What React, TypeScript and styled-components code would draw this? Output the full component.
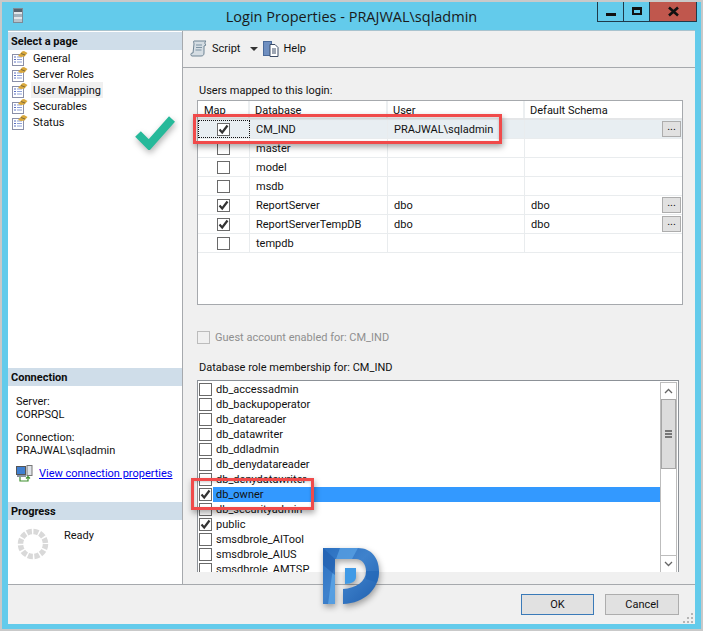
import styled, { createGlobalStyle } from 'styled-components'

const GlobalStyle = createGlobalStyle`
	html, body {
		margin: 0;
		padding: 0;
		background: #c9c9c9;
	}
	* {
		box-sizing: border-box;
	}
`

const mappings = [
	{ name: 'CM_IND', user: 'PRAJWAL\\sqladmin', schema: '', checked: true, action: true, focused: true },
	{ name: 'master', user: '', schema: '', checked: false, action: false, focused: false },
	{ name: 'model', user: '', schema: '', checked: false, action: false, focused: false },
	{ name: 'msdb', user: '', schema: '', checked: false, action: false, focused: false },
	{ name: 'ReportServer', user: 'dbo', schema: 'dbo', checked: true, action: true, focused: false },
	{ name: 'ReportServerTempDB', user: 'dbo', schema: 'dbo', checked: true, action: true, focused: false },
	{ name: 'tempdb', user: '', schema: '', checked: false, action: false, focused: false },
]

const roles = [
	'db_accessadmin',
	'db_backupoperator',
	'db_datareader',
	'db_datawriter',
	'db_ddladmin',
	'db_denydatareader',
	'db_denydatawriter',
	'db_owner',
	'db_securityadmin',
	'public',
	'smsdbrole_AITool',
	'smsdbrole_AIUS',
	'smsdbrole_AMTSP',
]

const pages = ['General', 'Server Roles', 'User Mapping', 'Securables', 'Status']

function PageIcon() {
	return (
		<svg width="16" height="16" viewBox="0 0 16 16">
			<rect x="0.5" y="4.5" width="11" height="11" fill="#fff" stroke="#8a8fa8" />
			<path d="M2 7h2M2 9.5h2M2 12h2" stroke="#5a6fc0" />
			<path d="M5 7h5M5 9.5h5M5 12h5" stroke="#8da0d8" />
			<path d="M6 6 10 1.5 12 1l3.5 2-3 3.5L9 7z" fill="#d9a83c" />
			<path d="M9 3.5 13 5" stroke="#7a6a40" />
		</svg>
	)
}

function CheckMark() {
	return (
		<svg width="11" height="11" viewBox="0 0 11 11">
			<path d="M1.5 5.5 4.2 8.5 9.5 1.5" fill="none" stroke="#333" strokeWidth="2.2" />
		</svg>
	)
}

function TitleIcon() {
	return (
		<svg width="10" height="15" viewBox="0 0 10 15">
			<rect x="0.5" y="0.5" width="9" height="14" fill="#e4e7ea" stroke="#7d8a96" />
			<rect x="1" y="1" width="8" height="3" fill="#59636e" />
			<rect x="1" y="6" width="8" height="3" fill="#a3b1bc" />
			<rect x="1" y="11" width="8" height="3" fill="#b9c3cb" />
		</svg>
	)
}

function ScriptIcon() {
	return (
		<svg width="18" height="17" viewBox="0 0 18 17">
			<path
				d="M4 1h12c-1.5 1-1.5 3 0 4l-2 1v7c0 2-1 3-3 3H2c-1.5 0-1.5-3 0-3h1l1-9C4 3 3 1 4 1z"
				fill="#d5dde3"
				stroke="#6f8494"
			/>
			<path d="M6 5h6M6 7.5h6M5.5 10h6" stroke="#7d93a3" />
		</svg>
	)
}

function HelpIcon() {
	return (
		<svg width="16" height="17" viewBox="0 0 16 17">
			<rect x="0.5" y="1.5" width="8" height="14" fill="#6f8fc0" stroke="#4a6a9a" />
			<path d="M7 4.5h5l3 3v9H7z" fill="#fff" stroke="#3d4c66" />
			<path d="M9 9h4M9 11h4M9 13h4" stroke="#3d4c66" />
		</svg>
	)
}

function ConnectionIcon() {
	return (
		<svg width="17" height="17" viewBox="0 0 17 17">
			<rect x="0.5" y="1.5" width="9" height="8" fill="#3f7fd0" stroke="#555" />
			<rect x="11" y="0.5" width="5" height="10" fill="#dfe3e8" stroke="#777" />
			<rect x="1" y="10" width="9" height="2" fill="#8a93a0" />
			<path d="M4 12v4h8v-4M10 13.5 12 11.5 14 13.5" fill="none" stroke="#3f8f2f" strokeWidth="1.2" />
		</svg>
	)
}

function App() {
	return (
		<>
			<GlobalStyle />
			<Screen>
				<TitleBar>
					<TitleBadge>
						<TitleIcon />
					</TitleBadge>
					<Title>Login Properties - PRAJWAL\sqladmin</Title>
					<WindowControls>
						<ControlButton>
							<MinimizeGlyph />
						</ControlButton>
						<ControlButton>
							<MaximizeGlyph />
						</ControlButton>
						<CloseButton>
							<svg width="13" height="11" viewBox="0 0 13 11">
								<path d="M2 1.5 11 9.5M11 1.5 2 9.5" stroke="#111" strokeWidth="2.6" />
							</svg>
						</CloseButton>
					</WindowControls>
				</TitleBar>
				<Content>
					<Body>
						<Sidebar>
							<PagesSection>
								<SectionHeader>Select a page</SectionHeader>
								<PageList>
									{pages.map((page) => (
										<PageItem key={page}>
											<PageIcon />
											<PageLabel $active={page === 'User Mapping'}>{page}</PageLabel>
										</PageItem>
									))}
								</PageList>
							</PagesSection>
							<ConnectionSection>
								<SectionHeader>Connection</SectionHeader>
								<ConnectionBody>
									<InfoBlock>
										<span>Server:</span>
										<span>CORPSQL</span>
									</InfoBlock>
									<InfoBlock>
										<span>Connection:</span>
										<span>PRAJWAL\sqladmin</span>
									</InfoBlock>
									<LinkRow>
										<ConnectionIcon />
										<ConnectionLink>View connection properties</ConnectionLink>
									</LinkRow>
								</ConnectionBody>
							</ConnectionSection>
							<ProgressSection>
								<SectionHeader>Progress</SectionHeader>
								<ProgressBody>
									<svg width="32" height="32" viewBox="0 0 32 32">
										<circle
											cx="16"
											cy="16"
											r="12.5"
											fill="none"
											stroke="#d9d9d9"
											strokeWidth="5.5"
											strokeDasharray="5 1.55"
										/>
									</svg>
									<ReadyText>Ready</ReadyText>
								</ProgressBody>
							</ProgressSection>
						</Sidebar>
						<Main>
							<Toolbar>
								<ToolButton>
									<ScriptIcon />
									<span>Script</span>
								</ToolButton>
								<DropArrow />
								<ToolButton>
									<HelpIcon />
									<span>Help</span>
								</ToolButton>
							</Toolbar>
							<Panel>
								<FieldLabel>Users mapped to this login:</FieldLabel>
								<MappingGrid>
									<GridHeader>
										<HeaderCell>Map</HeaderCell>
										<HeaderCell>Database</HeaderCell>
										<HeaderCell>User</HeaderCell>
										<HeaderCell>Default Schema</HeaderCell>
									</GridHeader>
									{mappings.map((row) => (
										<GridRow key={row.name} $focused={row.focused}>
											<MapCell $focused={row.focused}>
												<Checkbox>{row.checked && <CheckMark />}</Checkbox>
											</MapCell>
											<GridCell>{row.name}</GridCell>
											<GridCell>{row.user}</GridCell>
											<SchemaCell>
												{row.schema}
												{row.action && <EllipsisButton>...</EllipsisButton>}
											</SchemaCell>
										</GridRow>
									))}
								</MappingGrid>
								<GuestRow>
									<Checkbox $disabled />
									<span>Guest account enabled for: CM_IND</span>
								</GuestRow>
								<RoleLabel>Database role membership for: CM_IND</RoleLabel>
								<RoleList>
									<RoleRows>
										{roles.map((role) => (
											<RoleRow key={role}>
												<Checkbox>{(role === 'db_owner' || role === 'public') && <CheckMark />}</Checkbox>
												<RoleName $selected={role === 'db_owner'}>{role}</RoleName>
											</RoleRow>
										))}
									</RoleRows>
									<ScrollBar>
										<ScrollArrow>
											<svg width="9" height="6" viewBox="0 0 9 6">
												<path d="M1 5 4.5 1.5 8 5" fill="none" stroke="#666" strokeWidth="1.3" />
											</svg>
										</ScrollArrow>
										<ScrollThumb>
											<Grip />
											<Grip />
											<Grip />
										</ScrollThumb>
										<ScrollTrack />
										<ScrollArrow>
											<svg width="9" height="6" viewBox="0 0 9 6">
												<path d="M1 1 4.5 4.5 8 1" fill="none" stroke="#666" strokeWidth="1.3" />
											</svg>
										</ScrollArrow>
									</ScrollBar>
								</RoleList>
							</Panel>
						</Main>
					</Body>
					<Footer>
						<DefaultButton>OK</DefaultButton>
						<PushButton>Cancel</PushButton>
						<GripCorner viewBox="0 0 12 12">
							<path d="M9 2h2v2H9zM5 6h2v2H5zM9 6h2v2H9zM1 10h2v2H1zM5 10h2v2H5zM9 10h2v2H9z" fill="#b5b5b5" />
						</GripCorner>
					</Footer>
				</Content>
				<Callout $left={191} $top={112} $width={309} $height={30} />
				<Callout $left={189} $top={476} $width={123} $height={32} />
				<TickMark viewBox="0 0 40 36">
					<path d="M3 20 14 31 37 5" fill="none" stroke="#26b99a" strokeWidth="8" />
				</TickMark>
				<Logo viewBox="0 0 85 85">
					<defs>
						<linearGradient id="logoFill" x1="0" y1="0" x2="1" y2="1">
							<stop offset="0" stopColor="#2a6fc0" />
							<stop offset="0.45" stopColor="#3f82cc" />
							<stop offset="1" stopColor="#1f5fae" />
						</linearGradient>
						<clipPath id="logoShape">
							<path d="M13 13H48C62 13 69 24 69 36C69 54 55 68 33 69V54C46 53 56 47 56 36C56 29 52 24 46 24H25V69H13Z" />
						</clipPath>
					</defs>
					<path
						d="M13 13H48C62 13 69 24 69 36C69 54 55 68 33 69V54C46 53 56 47 56 36C56 29 52 24 46 24H25V69H13Z"
						fill="url(#logoFill)"
					/>
					<g clipPath="url(#logoShape)">
						<path d="M30 13H48L42 24H26z" fill="#5aa2e4" opacity="0.75" />
						<path d="M18 69 22 40 25 30V69z" fill="#62aceb" opacity="0.7" />
						<path d="M13 13 25 24V40L13 30z" fill="#1f5cab" opacity="0.6" />
						<path d="M56 36H69V48L56 44z" fill="#2368b8" opacity="0.7" />
					</g>
					<path d="M35 33H46V42C46 46 42 49 35 49Z" fill="#3f9ae6" />
				</Logo>
			</Screen>
		</>
	)
}

const Screen = styled.div`
	position: relative;
	width: 703px;
	height: 631px;
	border: 2px solid #c9c9c9;
	background: #63cbeb;
	padding: 0 6px 5px;
	overflow: hidden;
	display: flex;
	flex-direction: column;
	font-family: 'Roboto', 'Open Sans', sans-serif;
	font-size: 11px;
	color: #111;
`

const TitleBar = styled.div`
	position: relative;
	height: 29px;
	flex: none;
	display: flex;
	align-items: center;
	justify-content: center;
`

const TitleBadge = styled.div`
	position: absolute;
	left: 5px;
	top: 6px;
	display: flex;
`

const Title = styled.div`
	font-family: 'Open Sans', 'Noto Sans', sans-serif;
	font-size: 14.5px;
	color: #1a1a1a;
`

const WindowControls = styled.div`
	position: absolute;
	right: -2px;
	top: 0;
	height: 20px;
	display: flex;
	border: 1px solid #1f3a4a;
	border-top: none;
`

const ControlButton = styled.div`
	width: 26px;
	display: flex;
	align-items: center;
	justify-content: center;
	border-right: 1px solid #1f3a4a;
`

const CloseButton = styled.div`
	width: 46px;
	display: flex;
	align-items: center;
	justify-content: center;
	background: #c0574d;
`

const MinimizeGlyph = styled.div`
	width: 10px;
	height: 3px;
	margin-top: 5px;
	background: #111;
`

const MaximizeGlyph = styled.div`
	width: 10px;
	height: 8px;
	border: 2px solid #111;
	border-top-width: 3px;
	margin-bottom: 2px;
`

const Content = styled.div`
	flex: 1;
	display: flex;
	flex-direction: column;
	background: #f0f0f0;
	min-height: 0;
	box-shadow: 0 -1px 0 #a9c3ce;
`

const Body = styled.div`
	flex: 1;
	display: flex;
	min-height: 0;
	border-bottom: 1px solid #a6a9ad;
`

const Sidebar = styled.div`
	width: 175px;
	flex: none;
	display: flex;
	flex-direction: column;
	background: #fff;
	border-right: 1px solid #a6a9ad;
`

const SectionHeader = styled.div`
	height: 18px;
	padding: 1px 0 0 3px;
	background: #cfdde9;
	font-weight: 700;
	line-height: 18px;
	color: #0c0c0c;
`

const PagesSection = styled.div`
	flex: 1;
	padding-top: 1px;
`

const PageList = styled.div`
	display: flex;
	flex-direction: column;
	padding: 0 0 0 4px;
`

const PageItem = styled.div`
	height: 16px;
	display: flex;
	align-items: center;
	gap: 3px;
`

const PageLabel = styled.span<{ $active: boolean }>`
	height: 16px;
	padding: 0 2px;
	line-height: 18px;
	background: ${({ $active }) => ($active ? '#f0f0f0' : 'transparent')};
`

const ConnectionSection = styled.div`
	height: 134px;
	flex: none;
`

const ConnectionBody = styled.div`
	display: flex;
	flex-direction: column;
	gap: 10px;
	padding: 9px 0 0 8px;
`

const InfoBlock = styled.div`
	display: flex;
	flex-direction: column;
	line-height: 13px;
`

const LinkRow = styled.div`
	display: flex;
	align-items: center;
	gap: 6px;
	margin-top: -2px;
	white-space: nowrap;
`

const ConnectionLink = styled.a`
	color: #0000ee;
	text-decoration: underline;
`

const ProgressSection = styled.div`
	height: 82px;
	flex: none;
`

const ProgressBody = styled.div`
	display: flex;
	gap: 15px;
	padding: 8px 0 0 9px;
`

const ReadyText = styled.span`
	line-height: 16px;
`

const Main = styled.div`
	flex: 1;
	min-width: 0;
	display: flex;
	flex-direction: column;
`

const Toolbar = styled.div`
	height: 37px;
	flex: none;
	display: flex;
	align-items: center;
	padding: 0 0 2px 7px;
	border-bottom: 1px solid #a6a9ad;
`

const ToolButton = styled.div`
	display: flex;
	align-items: center;
	gap: 4px;
`

const DropArrow = styled.div`
	width: 0;
	height: 0;
	margin: 2px 5px 0 10px;
	border-left: 4px solid transparent;
	border-right: 4px solid transparent;
	border-top: 4px solid #333;
`

const Panel = styled.div`
	flex: 1;
	min-height: 0;
	padding: 14px 0 0 14px;
	display: flex;
	flex-direction: column;
`

const FieldLabel = styled.div`
	height: 16px;
	padding-left: 2px;
	line-height: 18px;
	margin-bottom: 2px;
`

const MappingGrid = styled.div`
	width: 486px;
	height: 205px;
	flex: none;
	background: #fff;
	border: 1px solid #a6a9ad;
`

const columns = '52px 138px 137px 1fr'

const GridHeader = styled.div`
	height: 19px;
	display: grid;
	grid-template-columns: ${columns};
	grid-template-rows: 17px;
	border-bottom: 2px solid #e4e6e8;
`

const HeaderCell = styled.div`
	padding-left: 5px;
	line-height: 19px;
	border-right: 2px solid #eceff1;

	&:first-child {
		padding-left: 6px;
	}

	&:last-child {
		border-right: none;
	}
`

const GridRow = styled.div<{ $focused: boolean }>`
	height: 19px;
	display: grid;
	grid-template-columns: ${columns};
	grid-template-rows: 18px;
	border-bottom: 1px solid #e9ecee;
	background: ${({ $focused }) => ($focused ? '#e8eef2' : 'transparent')};
`

const GridCell = styled.div`
	padding-left: 6px;
	line-height: 20px;
	border-right: 1px solid #e9ecee;
	white-space: nowrap;
`

const MapCell = styled(GridCell)<{ $focused: boolean }>`
	display: flex;
	align-items: center;
	justify-content: center;
	padding-left: 0;
	outline: ${({ $focused }) => ($focused ? '1px dotted #111' : 'none')};
	outline-offset: -1px;
`

const SchemaCell = styled(GridCell)`
	position: relative;
	border-right: none;
`

const EllipsisButton = styled.div`
	position: absolute;
	right: 1px;
	top: 1px;
	width: 19px;
	height: 16px;
	background: #e1e1e1;
	border: 1px solid #adadad;
	text-align: center;
	line-height: 10px;
`

const Checkbox = styled.div<{ $disabled?: boolean }>`
	width: 13px;
	height: 13px;
	flex: none;
	display: flex;
	align-items: center;
	justify-content: center;
	background: ${({ $disabled }) => ($disabled ? '#f0f0f0' : '#fff')};
	border: 1px solid ${({ $disabled }) => ($disabled ? '#bcbcbc' : '#6a6a6a')};
`

const GuestRow = styled.div`
	height: 16px;
	margin-top: 24px;
	display: flex;
	align-items: center;
	gap: 5px;
	color: #8f8f8f;
`

const RoleLabel = styled(FieldLabel)`
	margin-top: 14px;
	margin-bottom: 5px;
`

const RoleList = styled.div`
	width: 482px;
	height: 192px;
	flex: none;
	display: flex;
	background: #fff;
	border: 1px solid #8c9197;
	border-bottom: none;
	overflow: hidden;
	padding: 1px 1px 0 1px;
`

const RoleRows = styled.div`
	flex: 1;
	min-width: 0;
	display: flex;
	flex-direction: column;
`

const RoleRow = styled.div`
	height: 15px;
	flex: none;
	display: flex;
	align-items: center;
`

const RoleName = styled.div<{ $selected: boolean }>`
	flex: 1;
	height: 15px;
	margin-left: 1px;
	padding-left: 3px;
	line-height: 16px;
	background: ${({ $selected }) => ($selected ? '#3399ff' : 'transparent')};
`

const ScrollBar = styled.div`
	width: 17px;
	flex: none;
	display: flex;
	flex-direction: column;
	border: 1px solid #bdbdbd;
	border-bottom: none;
`

const ScrollArrow = styled.div`
	height: 16px;
	flex: none;
	display: flex;
	align-items: center;
	justify-content: center;
`

const ScrollThumb = styled.div`
	height: 70px;
	flex: none;
	display: flex;
	flex-direction: column;
	align-items: center;
	justify-content: center;
	gap: 1px;
	background: #dcdcdc;
	border: 1px solid #a6a6a6;
`

const Grip = styled.div`
	width: 7px;
	height: 2px;
	background: #777;
`

const ScrollTrack = styled.div`
	flex: 1;
	border-bottom: 1px solid #bdbdbd;
`

const Footer = styled.div`
	position: relative;
	height: 39px;
	flex: none;
	display: flex;
	justify-content: flex-end;
	gap: 11px;
	padding: 9px 16px 0 0;
`

const GripCorner = styled.svg`
	position: absolute;
	right: 1px;
	bottom: 1px;
	width: 12px;
	height: 12px;
`

const PushButton = styled.div`
	width: 74px;
	height: 21px;
	display: flex;
	align-items: center;
	justify-content: center;
	background: #e1e1e1;
	border: 1px solid #adadad;
`

const DefaultButton = styled(PushButton)`
	width: 73px;
	border-color: #3a7ab8;
`

const Callout = styled.div<{ $left: number; $top: number; $width: number; $height: number }>`
	position: absolute;
	left: ${({ $left }) => $left}px;
	top: ${({ $top }) => $top}px;
	width: ${({ $width }) => $width}px;
	height: ${({ $height }) => $height}px;
	border: 3px solid #f04a4a;
	box-shadow: 1px 3px 6px rgba(0, 0, 0, 0.35), inset 0 1px 3px rgba(0, 0, 0, 0.2);
`

const TickMark = styled.svg`
	position: absolute;
	left: 133px;
	top: 112px;
	width: 40px;
	height: 36px;
	filter: drop-shadow(1px 3px 3px rgba(0, 0, 0, 0.3));
`

const Logo = styled.svg`
	position: absolute;
	left: 308px;
	top: 533px;
	width: 85px;
	height: 85px;
	filter: drop-shadow(1px 3px 3px rgba(0, 0, 0, 0.35));
`

export default App
